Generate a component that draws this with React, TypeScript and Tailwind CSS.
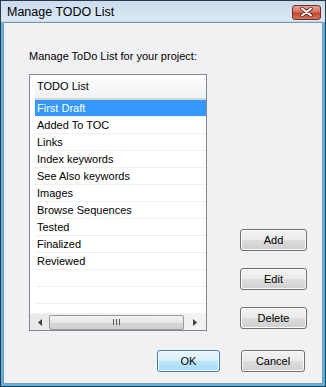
import React from 'react';

const items = [
    'First Draft',
    'Added To TOC',
    'Links',
    'Index keywords',
    'See Also keywords',
    'Images',
    'Browse Sequences',
    'Tested',
    'Finalized',
    'Reviewed',
    '',
    '',
];

const font = { fontFamily: '"Liberation Sans", Arial, sans-serif' };

const VistaButton: React.FC<{ label: string; primary?: boolean; className?: string }> = ({
    label,
    primary,
    className = '',
}) => (
    <button
        className={`h-[22px] rounded-[3px] border text-[11px] text-black ${
            primary
                ? 'border-[#3c7fb1] bg-[linear-gradient(#eaf6fd_0%,#d9f0fc_50%,#bee6fd_50%,#a7d9f5_100%)] shadow-[inset_0_0_0_1px_#fcfdfe]'
                : 'border-[#707070] bg-[linear-gradient(#f2f2f2_0%,#ebebeb_50%,#dddddd_50%,#cfcfcf_100%)] shadow-[inset_0_0_0_1px_#fbfbfb]'
        } ${className}`}
    >
        {label}
    </button>
);

export default function App() {
    return (
        <div
            style={font}
            className="w-[326px] h-[387px] flex flex-col border border-[#2c3a48] bg-[linear-gradient(#cbdcee,#dde8f4_20px,#5ab4e5_22px)] overflow-hidden"
        >
            {/* Title bar */}
            <div className="h-[21px] shrink-0 flex items-center justify-between pl-[6px] pr-[4px]">
                <span className="text-[12.5px] text-black leading-none pt-[1px]">Manage TODO List</span>
                <div className="w-[29px] h-[15px] mt-[1px] rounded-[3px] border border-[#6d2e27] bg-[linear-gradient(#e8a493_0%,#d6725e_45%,#c2462c_55%,#d5775c_100%)] flex items-center justify-center">
                    <svg width="13" height="10" viewBox="0 0 13 10">
                        <path
                            d="M2 1.5 L11 8.5 M11 1.5 L2 8.5"
                            stroke="#5a2a22"
                            strokeWidth="3.6"
                            strokeLinecap="round"
                        />
                        <path
                            d="M2 1.5 L11 8.5 M11 1.5 L2 8.5"
                            stroke="#ffffff"
                            strokeWidth="2"
                            strokeLinecap="round"
                        />
                    </svg>
                </div>
            </div>

            {/* Client area */}
            <div className="flex-1 mx-[2px] mb-[2px] border border-[#7d9ab3] bg-[#f1f0f3] pl-[25px] pt-[27px] flex flex-col">
                <div className="text-[11px] leading-[13px] text-black">Manage ToDo List for your project:</div>

                <div className="flex mt-[11px]">
                    {/* List box */}
                    <div className="w-[178px] h-[257px] border border-[#828790] bg-white flex flex-col">
                        <div className="flex-1 overflow-hidden pl-[5px]">
                            <div className="h-[25px] flex items-center pl-[2px] text-[11px] text-black bg-[linear-gradient(#ffffff,#f7f8fa_50%,#f1f2f4)] border-b-2 border-[#d5d5d5]">
                                TODO List
                            </div>
                            {items.map((it, i) => (
                                <div
                                    key={i}
                                    className={`h-[17px] flex items-center pl-[2px] text-[11px] border-b border-[#f0f0f0] ${
                                        i === 0 ? 'bg-[#3399ff] text-white' : 'text-black'
                                    }`}
                                >
                                    {it}
                                </div>
                            ))}
                        </div>
                        {/* Horizontal scrollbar */}
                        <div className="h-[17px] shrink-0 flex items-center bg-[linear-gradient(90deg,#e9e9e9,#f2f2f2)] border-t border-[#f4f4f4]">
                            <div className="w-[19px] flex items-center justify-center">
                                <svg width="4" height="7" viewBox="0 0 4 7">
                                    <path d="M4 0 L0 3.5 L4 7 Z" fill="#404040" />
                                </svg>
                            </div>
                            <div className="w-[135px] h-[15px] rounded-[2px] border border-[#9a9a9a] bg-[linear-gradient(#f3f3f3,#e6e6e6_50%,#d6d6d6_50%,#cfcfcf)] flex items-center justify-center gap-[2px]">
                                <span className="w-[1px] h-[6px] bg-[#555]" />
                                <span className="w-[1px] h-[6px] bg-[#555]" />
                                <span className="w-[1px] h-[6px] bg-[#555]" />
                            </div>
                            <div className="flex-1 flex items-center justify-center">
                                <svg width="4" height="7" viewBox="0 0 4 7">
                                    <path d="M0 0 L4 3.5 L0 7 Z" fill="#404040" />
                                </svg>
                            </div>
                        </div>
                    </div>

                    {/* Side buttons */}
                    <div className="flex flex-col ml-[33px] pt-[155px] gap-[17px]">
                        <VistaButton label="Add" className="w-[67px]" />
                        <VistaButton label="Edit" className="w-[67px]" />
                        <VistaButton label="Delete" className="w-[67px]" />
                    </div>
                </div>

                <div className="flex mt-[19px] ml-[128px] gap-[21px]">
                    <VistaButton label="OK" primary className="w-[63px]" />
                    <VistaButton label="Cancel" className="w-[64px]" />
                </div>
            </div>
        </div>
    );
}
